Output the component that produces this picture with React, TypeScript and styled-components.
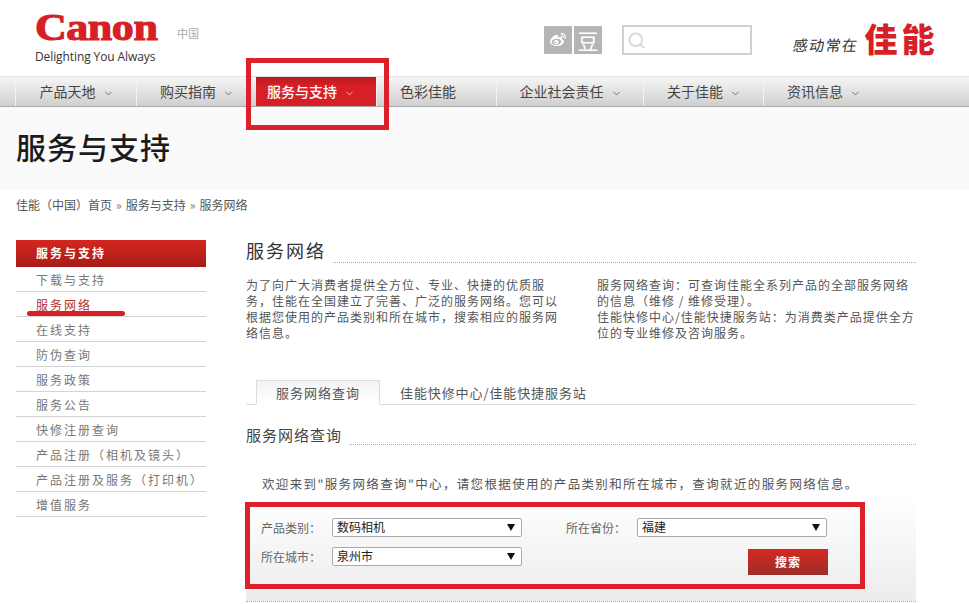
import styled, { createGlobalStyle } from "styled-components";
import { Search, ChevronDown } from "lucide-react";
import { FaWeibo } from "react-icons/fa";

const navItems = [
    { label: "产品天地", width: 121, arrow: true },
    { label: "购买指南", width: 120, arrow: true },
    { label: "服务与支持", width: 120, arrow: true, active: true },
    { label: "色彩佳能", width: 120, arrow: false },
    { label: "企业社会责任", width: 147, arrow: true },
    { label: "关于佳能", width: 120, arrow: true },
    { label: "资讯信息", width: 120, arrow: true },
];

const sideItems = ["下载与支持", "服务网络", "在线支持", "防伪查询", "服务政策", "服务公告", "快修注册查询", "产品注册（相机及镜头）", "产品注册及服务（打印机）", "增值服务"];

export default function App() {
    return (
        <Page>
            <GlobalStyle />
            <Header>
                <LogoBlock>
                    <Logo>Canon</Logo>
                    <Tagline>Delighting You Always</Tagline>
                </LogoBlock>
                <Region>中国</Region>
                <Social><FaWeibo size={16} /></Social>
                <Social $gap>豆</Social>
                <SearchBox><Search size={19} strokeWidth={2.5} color="#d8d8d8" /></SearchBox>
                <Slogan>感动常在</Slogan>
                <Brand>佳能</Brand>
            </Header>
            <Nav>
                {navItems.map((item) => (
                    <NavItem key={item.label} $active={item.active} style={{ width: item.width }}>
                        {item.label}
                        <NavArrow $hidden={!item.arrow}><ChevronDown size={11} strokeWidth={1.5} /></NavArrow>
                    </NavItem>
                ))}
            </Nav>
            <TitleBand>
                <PageTitle>服务与支持</PageTitle>
            </TitleBand>
            <Breadcrumb>
                佳能（中国）首页<Sep>»</Sep>服务与支持<Sep>»</Sep>服务网络
            </Breadcrumb>
            <Main>
                <Sidebar>
                    <SideHead>服务与支持</SideHead>
                    {sideItems.map((item) => (
                        <SideItem key={item} $active={item === "服务网络"}>{item}</SideItem>
                    ))}
                </Sidebar>
                <Content>
                    <SectionHead>
                        <SectionTitle>服务网络</SectionTitle>
                    </SectionHead>
                    <Intro>
                        <IntroText>
                            为了向广大消费者提供全方位、专业、快捷的优质服<br />
                            务，佳能在全国建立了完善、广泛的服务网络。您可以<br />
                            根据您使用的产品类别和所在城市，搜索相应的服务网<br />
                            络信息。
                        </IntroText>
                        <IntroText>
                            服务网络查询：可查询佳能全系列产品的全部服务网络<br />
                            的信息（维修 / 维修受理）。<br />
                            佳能快修中心/佳能快捷服务站：为消费类产品提供全方<br />
                            位的专业维修及咨询服务。
                        </IntroText>
                    </Intro>
                    <Tabs>
                        <Tab $active>服务网络查询</Tab>
                        <Tab>佳能快修中心/佳能快捷服务站</Tab>
                    </Tabs>
                    <SubHead>
                        <SubTitle>服务网络查询</SubTitle>
                    </SubHead>
                    <Welcome>欢迎来到"服务网络查询"中心，请您根据使用的产品类别和所在城市，查询就近的服务网络信息。</Welcome>
                    <FormPanel>
                        <FormColumn>
                            <Field><FieldLabel>产品类别：</FieldLabel><Select>数码相机</Select></Field>
                            <Field><FieldLabel>所在城市：</FieldLabel><Select>泉州市</Select></Field>
                        </FormColumn>
                        <FormColumn>
                            <Field><FieldLabel>所在省份：</FieldLabel><Select>福建</Select></Field>
                            <SearchButton>搜索</SearchButton>
                        </FormColumn>
                    </FormPanel>
                </Content>
            </Main>
            <NavMark />
            <SideMark />
            <FormMark />
        </Page>
    );
}

const GlobalStyle = createGlobalStyle`
    html, body {
        margin: 0;
        background: #fff;
        overflow: hidden;
    }
    * {
        box-sizing: border-box;
    }
`;

const Page = styled.div`
    position: relative;
    width: 969px;
    height: 604px;
    overflow: hidden;
    font-family: "Noto Sans CJK SC", "Liberation Sans", sans-serif;
    color: #555;
`;

const Header = styled.header`
    display: flex;
    align-items: flex-start;
    height: 76px;
    padding-left: 35px;
`;

const LogoBlock = styled.div`
    display: flex;
    flex-direction: column;
    width: 142px;
    padding-top: 11px;
`;

const Logo = styled.div`
    height: 33px;
    font-family: "Liberation Serif", serif;
    font-size: 37px;
    line-height: 33px;
    font-weight: 700;
    letter-spacing: -0.4px;
    color: #d71f28;
    -webkit-text-stroke: 1.1px #d71f28;
    transform: scaleX(1.19);
    transform-origin: left center;
`;

const Tagline = styled.div`
    margin-top: 5px;
    font-family: "Open Sans", "Liberation Sans", sans-serif;
    font-size: 12px;
    line-height: 16px;
    letter-spacing: -0.1px;
    white-space: nowrap;
    color: #333;
`;

const Region = styled.div`
    width: 367px;
    margin-top: 26px;
    font-size: 11px;
    line-height: 15px;
    color: #aaa;
`;

const Social = styled.div<{ $gap?: boolean }>`
    display: flex;
    align-items: center;
    justify-content: center;
    width: 28px;
    height: 28px;
    margin-top: 26px;
    margin-left: ${(p) => (p.$gap ? "2px" : "0")};
    background: #b5b5b5;
    color: #fff;
    font-size: 21px;
    line-height: 28px;
`;

const SearchBox = styled.div`
    display: flex;
    align-items: center;
    width: 130px;
    height: 30px;
    margin-top: 25px;
    margin-left: 20px;
    padding-left: 3px;
    border: 2px solid #d0d0d0;
`;

const Slogan = styled.div`
    margin-top: 35px;
    margin-left: 41px;
    font-size: 15px;
    line-height: 20px;
    letter-spacing: 1.4px;
    white-space: nowrap;
    color: #333;
    transform: skewX(-8deg);
`;

const Brand = styled.div`
    margin-top: 18px;
    margin-left: 6px;
    font-size: 33px;
    line-height: 40px;
    font-weight: 900;
    letter-spacing: 4px;
    white-space: nowrap;
    color: #d71f28;
`;

const Nav = styled.nav`
    display: flex;
    height: 31px;
    padding-left: 15px;
    border-top: 1px solid #e2e2e2;
    border-bottom: 1px solid #a8a8a8;
    background: linear-gradient(#f6f6f6, #cfcfcf);
`;

const NavItem = styled.div<{ $active?: boolean }>`
    display: flex;
    align-items: center;
    justify-content: center;
    gap: 7px;
    height: 100%;
    padding-bottom: 1px;
    padding-right: ${(p) => (p.$active ? "10px" : "0")};
    padding-left: ${(p) => (p.$active ? "0" : "1px")};
    font-size: 14px;
    white-space: nowrap;
    color: ${(p) => (p.$active ? "#fff" : "#444")};
    background: ${(p) => (p.$active ? "linear-gradient(#b81a22, #d71f28 30%)" : "none")};
    border-left: ${(p) => (p.$active ? "none" : "1px solid #f2f2f2")};
    font-weight: ${(p) => (p.$active ? 500 : 400)};
`;

const NavArrow = styled.span<{ $hidden?: boolean }>`
    display: flex;
    margin-top: 4px;
    visibility: ${(p) => (p.$hidden ? "hidden" : "visible")};
`;

const TitleBand = styled.div`
    display: flex;
    align-items: center;
    height: 83px;
    padding-left: 16px;
    background: #fafafa;
`;

const PageTitle = styled.h1`
    margin: 0 0 5px;
    font-size: 30px;
    line-height: 40px;
    font-weight: 500;
    letter-spacing: 1px;
    color: #1c1c1c;
`;

const Breadcrumb = styled.div`
    height: 50px;
    padding: 6px 0 0 16px;
    font-size: 12px;
    line-height: 17px;
    white-space: nowrap;
    color: #555;
`;

const Sep = styled.span`
    margin: 0 4px;
    color: #777;
`;

const Main = styled.div`
    display: flex;
    align-items: flex-start;
    padding-left: 16px;
`;

const Sidebar = styled.aside`
    width: 190px;
    flex-shrink: 0;
`;

const SideHead = styled.div`
    height: 27px;
    padding-left: 20px;
    font-size: 12px;
    line-height: 25px;
    font-weight: 700;
    letter-spacing: 2px;
    color: #fff;
    background: linear-gradient(#d4261f, #a81c18);
`;

const SideItem = styled.div<{ $active?: boolean }>`
    height: 25px;
    padding-left: 20px;
    font-size: 12px;
    line-height: 26px;
    letter-spacing: 2px;
    white-space: nowrap;
    color: ${(p) => (p.$active ? "#b3302c" : "#777")};
    border-bottom: 1px solid #d4d4d4;
`;

const Content = styled.main`
    width: 670px;
    margin-left: 40px;
`;

const SectionHead = styled.div`
    display: flex;
    height: 23px;
    border-bottom: 1px dotted #aaa;
`;

const SectionTitle = styled.h2`
    margin: 0;
    height: 26px;
    padding-right: 6px;
    background: #fff;
    font-size: 18px;
    line-height: 21px;
    font-weight: 400;
    letter-spacing: 2px;
    color: #333;
`;

const Intro = styled.div`
    display: flex;
    gap: 51px;
    margin-top: 14px;
`;

const IntroText = styled.p`
    width: 300px;
    margin: 0;
    font-size: 12px;
    line-height: 16px;
    letter-spacing: 1px;
    white-space: nowrap;
    color: #555;
`;

const Tabs = styled.div`
    display: flex;
    height: 25px;
    margin-top: 39px;
    padding-left: 10px;
    border-bottom: 1px solid #ddd;
`;

const Tab = styled.div<{ $active?: boolean }>`
    height: 25px;
    padding: 0 19px;
    font-size: 13px;
    line-height: 23px;
    letter-spacing: ${(p) => (p.$active ? "1px" : "0.9px")};
    white-space: nowrap;
    color: #555;
    background: ${(p) => (p.$active ? "linear-gradient(#f3f3f3, #fff)" : "none")};
    border: ${(p) => (p.$active ? "1px solid #ddd" : "1px solid transparent")};
    border-bottom: ${(p) => (p.$active ? "1px solid #fff" : "none")};
`;

const SubHead = styled.div`
    display: flex;
    height: 21px;
    margin-top: 19px;
    border-bottom: 1px dotted #aaa;
`;

const SubTitle = styled.h3`
    margin: 0;
    height: 24px;
    padding-right: 7px;
    background: #fff;
    font-size: 15px;
    line-height: 22px;
    font-weight: 400;
    letter-spacing: 1px;
    color: #444;
`;

const Welcome = styled.p`
    margin: 29px 0 0 16px;
    font-size: 12.5px;
    line-height: 20px;
    letter-spacing: 1.36px;
    white-space: nowrap;
    color: #555;
`;

const FormPanel = styled.form`
    display: flex;
    gap: 44px;
    height: 107px;
    margin-top: 1px;
    padding: 23px 0 0 15px;
    background: linear-gradient(#fff, #ececec);
    border-bottom: 1px dotted #aaa;
`;

const FormColumn = styled.div`
    display: flex;
    flex-direction: column;
    gap: 10px;
    width: 261px;
`;

const Field = styled.div`
    display: flex;
    align-items: center;
    height: 19px;
`;

const FieldLabel = styled.label`
    width: 71px;
    font-size: 12px;
    color: #666;
`;

const Select = styled.div`
    position: relative;
    width: 190px;
    height: 19px;
    padding-left: 4px;
    background: #fff;
    border: 1px solid #aaa;
    border-radius: 2px;
    font-size: 12px;
    line-height: 15px;
    color: #222;

    &::after {
        content: "";
        position: absolute;
        top: 5px;
        right: 6px;
        border-left: 4px solid transparent;
        border-right: 4px solid transparent;
        border-top: 7px solid #111;
    }
`;

const SearchButton = styled.div`
    align-self: flex-end;
    width: 80px;
    height: 26px;
    margin-top: 2px;
    margin-right: -1px;
    background: linear-gradient(#d5281f, #9c2f2b);
    color: #fff;
    font-size: 12px;
    line-height: 26px;
    font-weight: 700;
    letter-spacing: 1px;
    text-align: center;
`;

const Mark = styled.div`
    position: absolute;
    border: 5px solid #dd212c;
    pointer-events: none;
`;

const NavMark = styled(Mark)`
    left: 246px;
    top: 58px;
    width: 143px;
    height: 72px;
`;

const FormMark = styled(Mark)`
    left: 245px;
    top: 502px;
    width: 620px;
    height: 87px;
`;

const SideMark = styled.div`
    position: absolute;
    left: 27px;
    top: 311px;
    width: 98px;
    height: 5px;
    border-radius: 3px;
    background: #d71f28;
`;
